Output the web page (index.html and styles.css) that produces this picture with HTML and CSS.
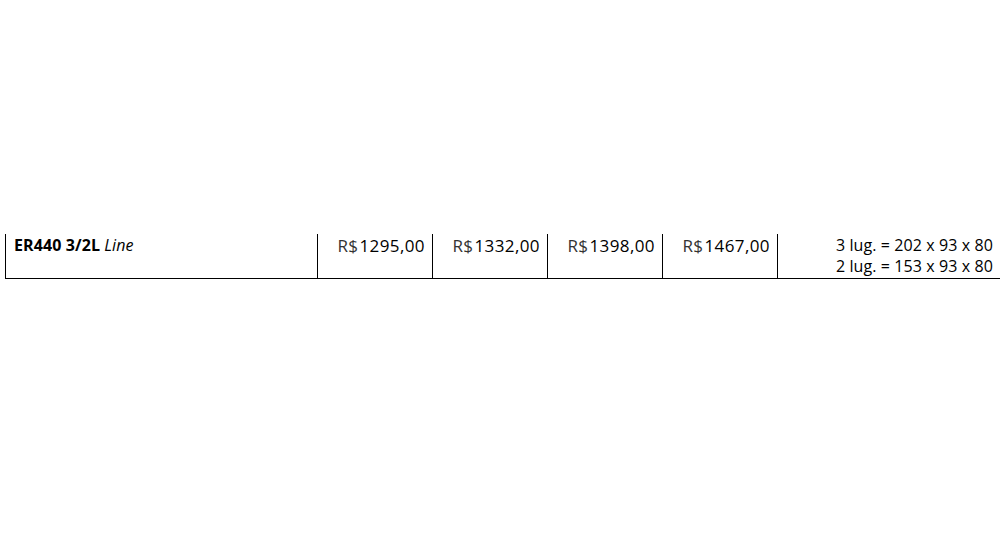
FILE: index.html
```html
<!DOCTYPE html>
<html>
<head>
<meta charset="utf-8">
<link rel="stylesheet" href="styles.css">
</head>
<body>
<table class="price-table">
  <tr>
    <td class="name"><b>ER440 3/2L</b> <i>Line</i></td>
    <td class="price"><span class="cur">R$</span>1295,00</td>
    <td class="price"><span class="cur">R$</span>1332,00</td>
    <td class="price"><span class="cur">R$</span>1398,00</td>
    <td class="price"><span class="cur">R$</span>1467,00</td>
    <td class="dims">3 lug. = 202 x 93 x 80<br>2 lug. = 153 x 93 x 80</td>
  </tr>
</table>
</body>
</html>
```
FILE: styles.css
```css
html, body {
  margin: 0;
  padding: 0;
  background: #ffffff;
}
body {
  font-family: "Open Sans", "Noto Sans", sans-serif;
  font-size: 16px;
  color: #000;
}
.price-table {
  border-collapse: collapse;
  margin: 234px 0 0 5px;
  width: 995px;
  table-layout: fixed;
}
.price-table td {
  vertical-align: top;
  height: 44px;
  box-sizing: border-box;
  padding: 1px 7px 0 8px;
  border-left: 1px solid #000;
  border-bottom: 1px solid #000;
  line-height: 21px;
  white-space: nowrap;
}
.name { width: 312px; letter-spacing: 0.1px; }
.price {
  width: 115px;
  text-align: right;
  font-size: 17px;
  letter-spacing: 0.4px;
}
.cur { color: #333; margin-right: 1px; }
.dims { text-align: right; padding-right: 9px; letter-spacing: 0.1px; }
.name b { font-weight: 700; }
```
